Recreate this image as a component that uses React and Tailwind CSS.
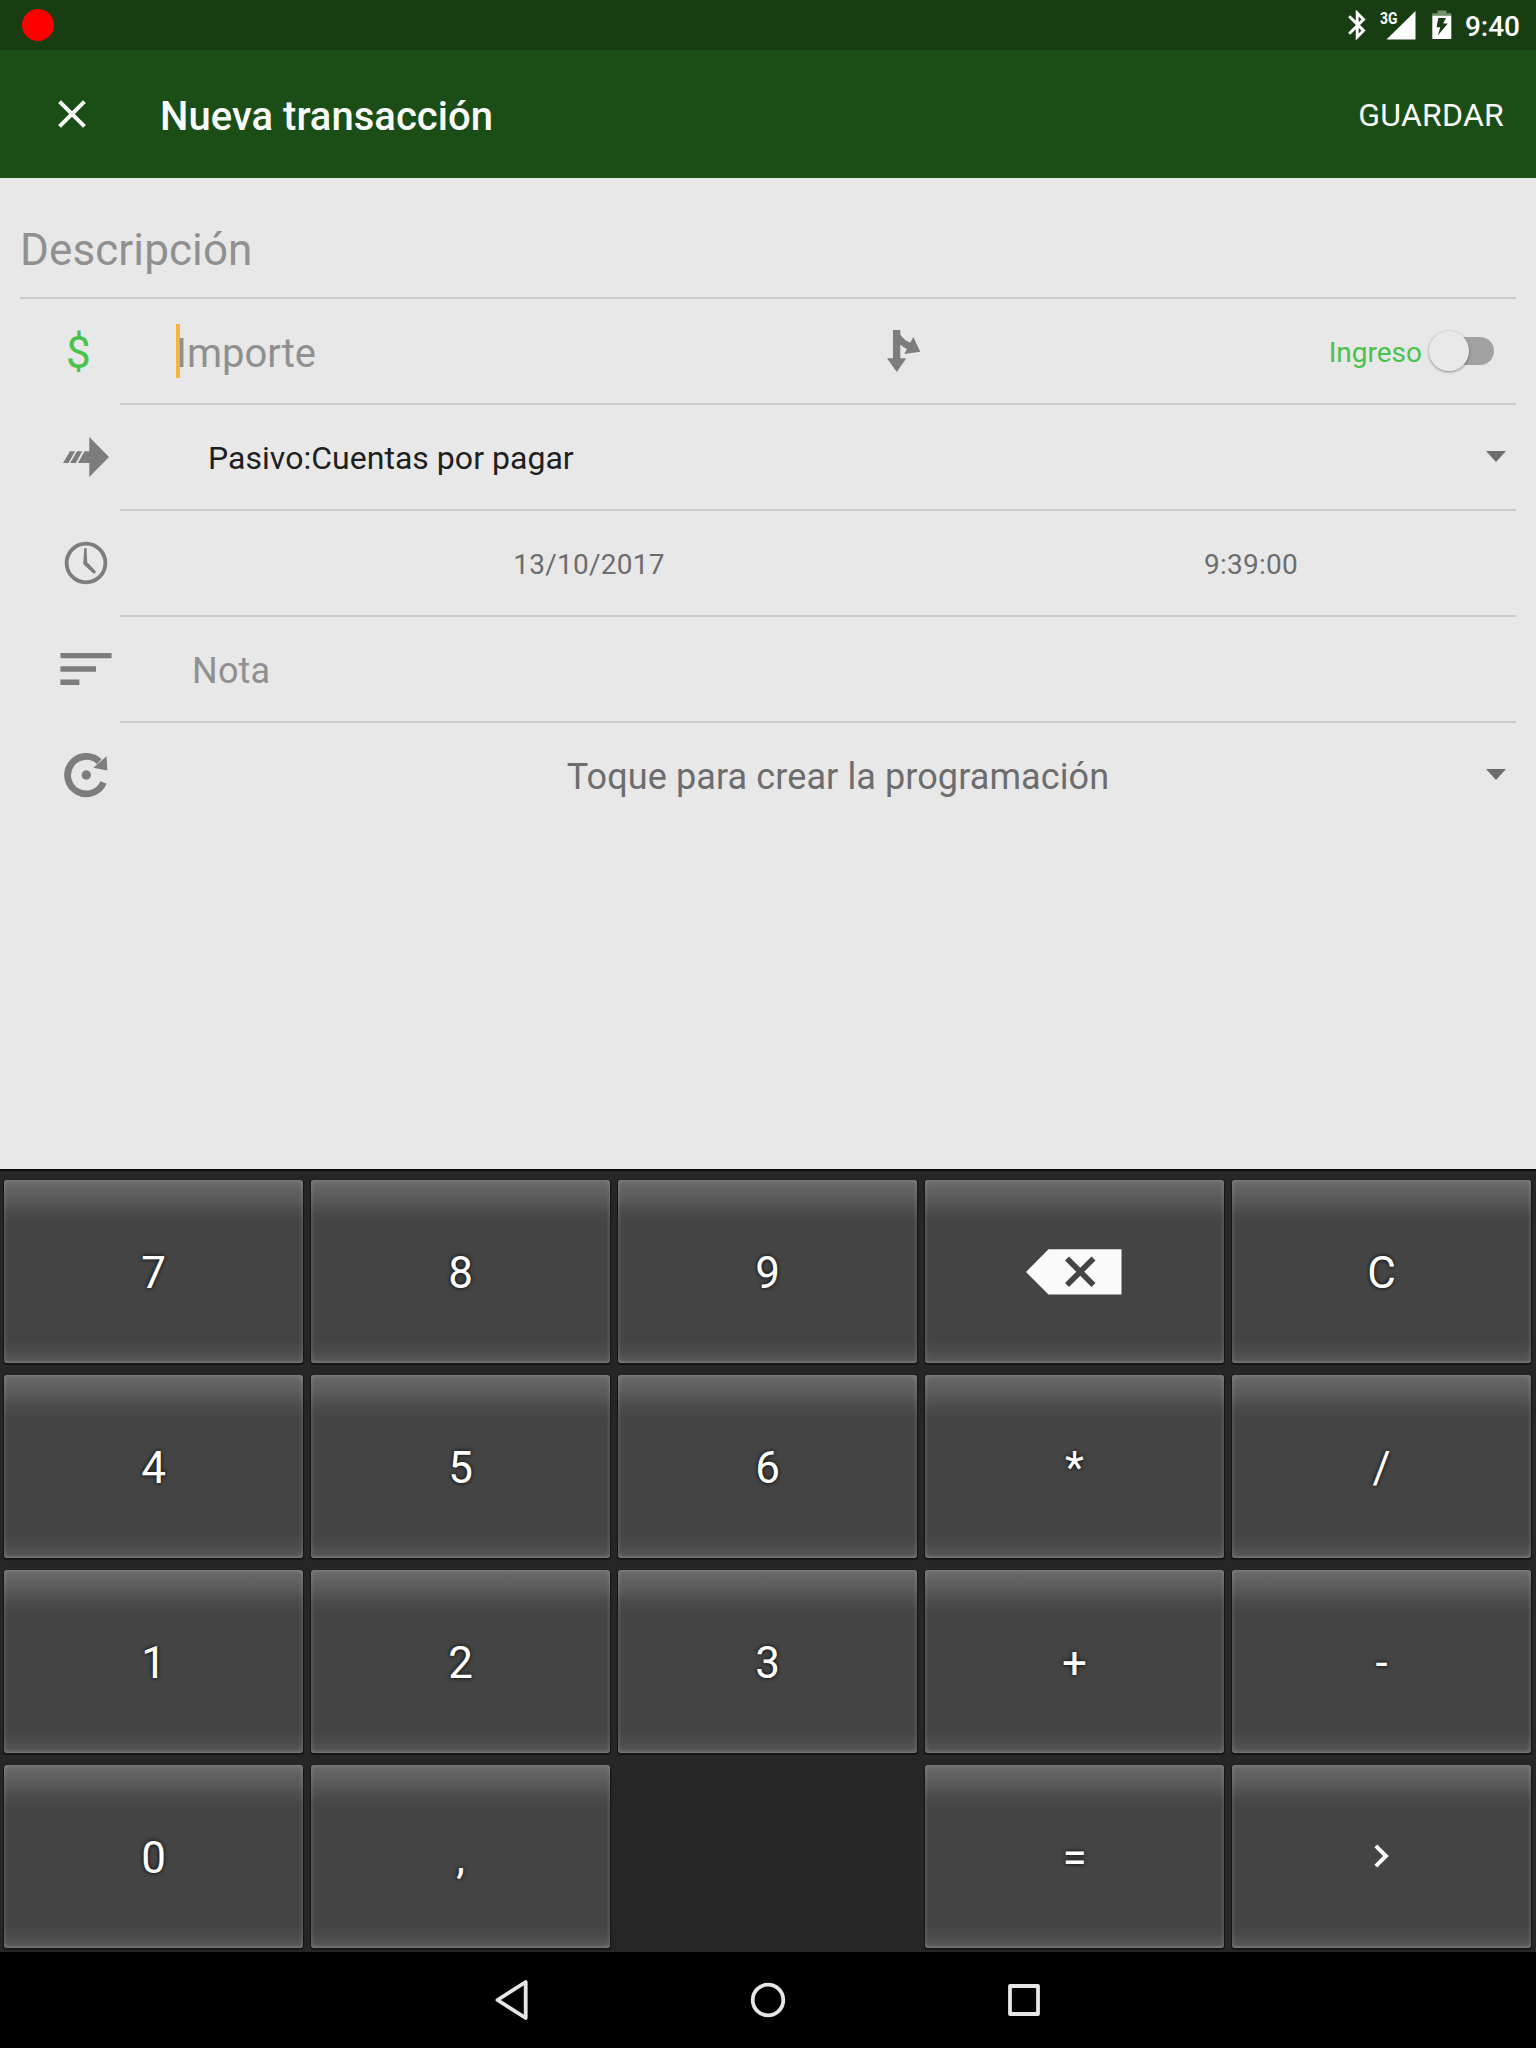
function Caret() {
  return (
    <svg width="20" height="11" viewBox="0 0 20 11">
      <path d="M0 0H20L10 11Z" fill="#6d6d6d" />
    </svg>
  );
}

function StatusBar() {
  return (
    <div className="flex h-[50px] items-center bg-[#183d12] text-white">
      <div className="ml-[22px] size-8 rounded-full bg-[#ff0000]" />
      <svg className="ml-auto" width="18" height="30" viewBox="0 0 18 30" fill="none" stroke="white" strokeWidth="2.9">
        <path d="M1.2 6.2L15.6 20.6L9.2 27V3L15.6 9.4L1.2 23.8" />
      </svg>
      <svg className="ml-[14px]" width="36" height="30" viewBox="0 0 36 30">
        <path d="M6.5 29.5L35.5 1V29.5Z" fill="white" />
        <text x="0" y="13.7" fill="white" fontFamily="Roboto" fontSize="16.5" fontWeight="700" textLength="17.5" lengthAdjust="spacingAndGlyphs">3G</text>
      </svg>
      <svg className="ml-4" width="20" height="30" viewBox="0 0 20 30">
        <path d="M5.5 0.5H14.5V3.2H19.3V6H0.3V3.2H5.5Z" fill="#74906f" />
        <path d="M0.3 5.8H19.3V29H0.3Z" fill="white" />
        <path d="M6.3 8H14L11.2 13.5H15.8L5.8 25.5L8.3 17.3H4.6Z" fill="#183d12" />
      </svg>
      <div className="ml-[13px] mr-4 pt-1 text-[28px] font-medium leading-8">9:40</div>
    </div>
  );
}

function Toolbar() {
  return (
    <div className="flex h-32 items-center bg-[#1b4d17] text-[#fafafa]">
      <svg className="ml-[58px]" width="28" height="28" viewBox="0 0 28 28" stroke="white" strokeWidth="4" fill="none">
        <path d="M1.6 1.6L26.4 26.4M26.4 1.6L1.6 26.4" />
      </svg>
      <h1 className="ml-[74px] pt-1.5 text-[40px] font-medium leading-[48px] tracking-[0.03px]">Nueva transacción</h1>
      <button className="ml-auto mr-8 pt-0.5 text-[32px] leading-10 tracking-[0.25px]">GUARDAR</button>
    </div>
  );
}

function Row({ icon, children, last }) {
  return (
    <div className="flex h-[106px]">
      <div className="flex w-[100px] items-center">{icon}</div>
      <div className={last ? "flex flex-1 items-center" : "flex flex-1 items-center border-b-2 border-[#cbcbcb]"}>{children}</div>
    </div>
  );
}

function TransferIcon() {
  return (
    <svg className="mb-0.5 ml-[43px]" width="46" height="40" viewBox="0 0 46 40" fill="#7d7d7d">
      <path d="M26.3 0L46 20L26.3 40V26H15L21.5 14.3H26.3Z" />
      <path d="M0 26L7 14.3H12L5.5 26ZM7.2 26L14 14.3H19.3L12.8 26Z" />
    </svg>
  );
}

function ClockIcon() {
  return (
    <svg className="mb-0.5 ml-[44px]" width="44" height="44" viewBox="0 0 44 44" fill="none" stroke="#7d7d7d">
      <circle cx="22" cy="22" r="19.4" strokeWidth="3.8" />
      <path d="M20.2 7.5Q21.4 6.6 22.6 7.5L23.2 21.3L31.8 30.3Q32 32.5 29.8 32.7L19.2 23.2Z" fill="#7d7d7d" stroke="none" />
    </svg>
  );
}

function NoteIcon() {
  return (
    <svg className="mb-0.5 ml-10" width="52" height="32" viewBox="0 0 52 32" fill="#7d7d7d">
      <path d="M0.4 0H51.6V5.3H0.4ZM0.4 13.2H36V18.8H0.4ZM0.4 26.6H19.4V32H0.4Z" />
    </svg>
  );
}

function RepeatIcon() {
  return (
    <svg className="mb-0.5 ml-[44px]" width="44" height="46" viewBox="0 0 44 46">
      <path d="M39.5 30.5A18.7 18.7 0 1 1 35.3 9.7" fill="none" stroke="#7d7d7d" strokeWidth="6.8" />
      <path d="M42.6 4.3L43.3 18.6L29.3 15.8Z" fill="#7d7d7d" />
      <circle cx="22.3" cy="23" r="4.7" fill="#7d7d7d" />
    </svg>
  );
}

function SplitIcon() {
  return (
    <svg width="34" height="42" viewBox="0 0 34 42" fill="#7d7d7d">
      <path d="M6 0H13.3V4.5Q17 10.5 23.3 12.5L26.3 7L33.3 21.7L17.3 24L20 19Q16 17.5 13.3 14.5V28.3H19.3L9.8 42L0 28.3H6Z" />
    </svg>
  );
}

function TransactionForm() {
  return (
    <div className="h-[991px] bg-[#e8e8e8] px-5 text-[#909090]">
      <div className="h-[121px] border-b-2 border-[#cbcbcb] pt-[45px] text-[44px] leading-[54px] tracking-[0.1px]">Descripción</div>

      <Row icon={<span className="ml-[46px] pt-0.5 text-[44px] leading-[48px] text-[#4ac24e]">$</span>}>
        <div className="relative ml-14 w-[711px] pt-1.5 text-[40px] leading-[54px]">
          <span className="absolute left-0 top-[3px] h-[54px] w-1 bg-[#faa91a]/80" />
          <span className="relative">Importe</span>
        </div>
        <SplitIcon />
        <span className="ml-auto pt-1 text-[28px] leading-8 text-[#4ac24e]">Ingreso</span>
        <div className="relative ml-[7px] mr-[22px] h-7 w-[65px]">
          <div className="absolute inset-y-0 right-0 w-[56px] rounded-full bg-[#a2a2a2]" />
          <div className="absolute -top-1.5 left-0 size-10 rounded-full bg-[#e9e9e9] shadow-[0_1px_3px_rgba(0,0,0,0.4)]" />
        </div>
      </Row>

      <Row icon={<TransferIcon />}>
        <span className="ml-[88px] pt-0.5 text-[32px] leading-10 tracking-[0.03px] text-[#1f1f1f]">Pasivo:Cuentas por pagar</span>
        <div className="mb-px ml-auto mr-2.5"><Caret /></div>
      </Row>

      <Row icon={<ClockIcon />}>
        <div className="flex flex-1 pt-1 text-[28px] leading-8 tracking-[0.25px] text-[#6d6d6d]">
          <span className="w-[938px] text-center">13/10/2017</span>
          <span className="w-[386px] text-center">9:39:00</span>
        </div>
      </Row>

      <Row icon={<NoteIcon />}>
        <span className="ml-[72px] pt-1 text-[36px] leading-[44px] tracking-[0.2px]">Nota</span>
      </Row>

      <Row last icon={<RepeatIcon />}>
        <span className="flex-1 pl-[70px] pt-0.5 text-center text-[36px] leading-[44px] tracking-[0.1px] text-[#6d6d6d]">Toque para crear la programación</span>
        <div className="mb-1 mr-2.5"><Caret /></div>
      </Row>
    </div>
  );
}

function BackspaceIcon() {
  return (
    <svg className="mb-px" width="97" height="46" viewBox="0 0 97 46">
      <path d="M0 23L22.5 0.3H95.5V45.6H22.5Z" fill="#fafafa" />
      <path d="M41 9.5L67.5 36M67.5 9.5L41 36" stroke="#444444" strokeWidth="5.6" />
    </svg>
  );
}

function NextIcon() {
  return (
    <svg className="mb-[3px]" width="15" height="24" viewBox="0 0 15 24" fill="none" stroke="white" strokeWidth="4">
      <path d="M1.8 1.8L12 12L1.8 22.2" />
    </svg>
  );
}

const KEYS = [
  "7", "8", "9", <BackspaceIcon />, "C",
  "4", "5", "6", "*", "/",
  "1", "2", "3", "+", "-",
  "0", ",", null, "=", <NextIcon />,
];

function Keypad() {
  return (
    <div className="grid h-[783px] auto-rows-[183px] grid-cols-[repeat(5,299px)] gap-x-2 gap-y-3 border-t-2 border-[#0c0c0c] bg-[#262626] pl-1 pt-[9px]">
      {KEYS.map((key, i) =>
        key === null ? <div key={i} /> : (
          <button
            key={i}
            className="flex items-center justify-center rounded-[3px] bg-[linear-gradient(to_bottom,#6a6a6a_0px,#5a5a5a_19px,#4c4c4c_31px,#444444_43px,#444444_160px,#4a4a4a_170px,#545454_180px,#666666_183px)] pt-0.5 text-[44px] text-white shadow-[inset_0_0_5px_rgba(255,255,255,0.22),0_1px_1px_1px_#151515] [text-shadow:0_0_4px_#000000]"
          >
            {key}
          </button>
        )
      )}
    </div>
  );
}

function NavBar() {
  return (
    <div className="flex h-24 items-center justify-center bg-black">
      <svg width="768" height="48" viewBox="0 0 768 48" fill="none" stroke="#e6e6e6" strokeWidth="3.8" strokeLinejoin="round">
        <path d="M113.5 24L141.7 6V42Z" />
        <circle cx="384" cy="24" r="15.3" />
        <rect x="626" y="10" width="28" height="28" />
      </svg>
    </div>
  );
}

export default function App() {
  return (
    <main className="h-[2048px] w-[1536px] overflow-hidden font-['Roboto',sans-serif]">
      <StatusBar />
      <Toolbar />
      <TransactionForm />
      <Keypad />
      <NavBar />
    </main>
  );
}
